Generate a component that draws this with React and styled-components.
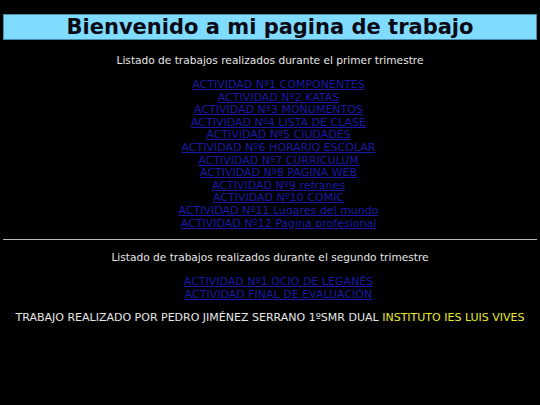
import React from "react";
import styled, { createGlobalStyle } from "styled-components";

const GlobalStyle = createGlobalStyle`
  html, body {
    margin: 0;
    background: #000;
  }
  body {
    font-family: "DejaVu Sans", Verdana, sans-serif;
    color: #e6e6e6;
  }
`;

const primero = [
  "ACTIVIDAD Nº1 COMPONENTES",
  "ACTIVIDAD Nº2 KATAS",
  "ACTIVIDAD Nº3 MONUMENTOS",
  "ACTIVIDAD Nº4 LISTA DE CLASE",
  "ACTIVIDAD Nº5 CIUDADES",
  "ACTIVIDAD Nº6 HORARIO ESCOLAR",
  "ACTIVIDAD Nº7 CURRICULUM",
  "ACTIVIDAD Nº8 PAGINA WEB",
  "ACTIVIDAD Nº9 refranes",
  "ACTIVIDAD Nº10 COMIC",
  "ACTIVIDAD Nº11 Lugares del mundo",
  "ACTIVIDAD Nº12 Pagina profesional",
];

const segundo = ["ACTIVIDAD Nº1 OCIO DE LEGANÉS", "ACTIVIDAD FINAL DE EVALUACIÓN"];

const App = () => {
  return (
    <Page>
      <GlobalStyle />
      <Header>Bienvenido a mi pagina de trabajo</Header>

      <Section>
        <Intro $top={14}>Listado de trabajos realizados durante el primer trimestre</Intro>
        <LinkList>
          {primero.map((t) => (
            <Link key={t} href="#">{t}</Link>
          ))}
        </LinkList>
      </Section>

      <Rule />

      <Section>
        <Intro $top={11}>Listado de trabajos realizados durante el segundo trimestre</Intro>
        <LinkList>
          {segundo.map((t) => (
            <Link key={t} href="#">{t}</Link>
          ))}
        </LinkList>
      </Section>

      <Footer>
        TRABAJO REALIZADO POR PEDRO JIMÉNEZ SERRANO 1ºSMR DUAL <School>INSTITUTO IES LUIS VIVES</School>
      </Footer>
    </Page>
  );
};

const Page = styled.div`
  padding: 14px 3px 0;
  min-height: 391px;
  background: #000;
`;

const Header = styled.h1`
  margin: 0;
  background: #80dcff;
  border: 1px solid #4a8aa8;
  color: #0a0a14;
  font-size: 21px;
  font-weight: bold;
  text-align: center;
  line-height: 24px;
`;

const Section = styled.div`
  display: flex;
  flex-direction: column;
  align-items: center;
`;

const Intro = styled.p`
  margin: ${(p) => p.$top}px 0 12px;
  font-size: 10.6px;
  line-height: 13px;
`;

const LinkList = styled.div`
  display: flex;
  flex-direction: column;
  align-items: center;
  padding-left: 17px;
`;

const Link = styled.a`
  color: #1a1aa6;
  font-size: 11px;
  line-height: 12.6px;
`;

const Rule = styled.hr`
  margin: 9px 0 0;
  border: none;
  border-top: 1px solid #bbb;
`;

const Footer = styled.p`
  margin: 10px 0 0;
  text-align: center;
  font-size: 11px;
  line-height: 13px;
`;

const School = styled.span`
  color: #e8e82a;
`;

export default App;
